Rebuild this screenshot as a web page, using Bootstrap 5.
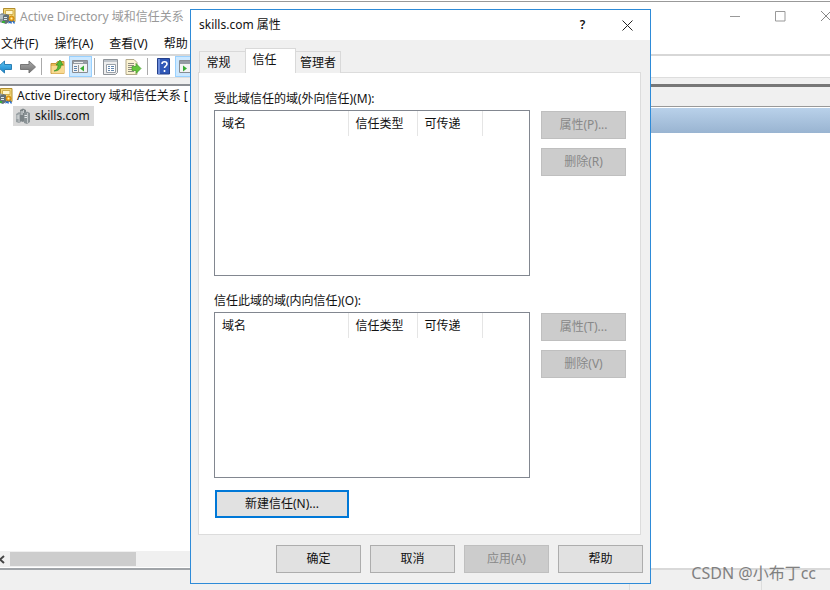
<!DOCTYPE html>
<html lang="zh-CN">
<head>
<meta charset="utf-8">
<meta name="viewport" content="width=device-width, initial-scale=1">
<title>Active Directory 域和信任关系</title>
<link href="https://cdn.jsdelivr.net/npm/bootstrap@5.3.0/dist/css/bootstrap.min.css" rel="stylesheet">
<style>
body { font: 12px/18px "Noto Sans", "Noto Sans CJK SC", sans-serif; color: #111; background: #fff; }
button { font: inherit; color: inherit; }
svg { display: block; flex: none; }
.app { border-top: 1px solid #999; margin-top: 1px; height: calc(100vh - 1px); }
.app-title { height: 31px; color: #999; }
.app-title .caption { padding-top: 6px; }
.win-btn { width: 45px; height: 28px; }
.win-close { width: 27px; }
.menus { height: 21px; padding-left: 1px; gap: 16px; }
.menus button { white-space: nowrap; }
.tools { height: 24px; border-top: 2px solid #d7d7d7; border-bottom: 1px solid #ddd; }
.tool { width: 23px; height: 21px; display: flex; align-items: center; justify-content: center; }
.tool-cut { width: 16px; justify-content: flex-start; }
.tool-on { background: #cce8ff; border: 1px solid #99d1ff; }
.rule { width: 1px; height: 17px; background: #aaa; margin: 0 4px 0 2px; }
.strip { height: 6px; background: #f0f0f0; }
.tree { width: 50%; border-top: 2px solid #8c8f94; }
.tree-row { height: 20px; }
.tree-picked { background: #d9d9d9; margin-left: 13px; padding: 0 4px 0 2px; gap: 4px; }
.scroller { height: 16px; background: #f0f0f0; }
.scroll-thumb { width: 126px; height: 14px; background: #cdcdcd; margin-left: 5px; }
.detail { border-top: 3px solid #777; }
.detail-head { height: 20px; background: #f0f0f0; border-bottom: 1px solid #999; }
.detail-bar { height: 25px; margin-top: 1px; background: linear-gradient(#b9d1ea, #99b4d1); }
.status { height: 22px; background: #f0f0f0; border-top: 2px solid #d9d9d9; margin-top: 1px; }
.status-left { margin-top: -2px; border-top: 2px solid #a0a4a8; width: 190px; }
.status-center { width: 440px; border-right: 1px solid #ddd; }
.status-mid { width: 132px; border-right: 1px solid #ddd; }
.dlg { position: absolute; left: 190px; top: 9px; width: 461px; background: #f0f0f0; border: 1px solid #2e8bd8; }
.dlg-title { height: 30px; padding-left: 8px; }
.dlg-body { padding: 8px 9px 10px 7px; }
.dlg .tabs { padding-left: 1px; position: relative; margin-bottom: -1px; }
.tab-btn { height: 22px; border: 1px solid #d9d9d9; border-bottom: 0; background: #f0f0f0; padding: 0; width: 46px; }
.tab-btn span { display: block; margin-right: 8px; }
.tab-last { width: 45px; border-left: 0; }
.tab-last span { margin-right: 0; }
.tab-btn.active { height: 25px; width: 51px; background: #fff; padding-bottom: 2px; }
.pane { background: #fff; border: 1px solid #dcdcdc; padding: 17px 14px 16px 15px; }
.group-label { margin-bottom: 2px; }
.list-box { height: 166px; border: 1px solid #828790; background: #fff; }
.list-box table { width: 100%; table-layout: fixed; border-collapse: collapse; }
.list-box th { font-weight: 400; height: 25px; padding: 1px 0 0 7px; border-right: 1px solid #e5e5e5; }
.list-box th:last-child { border-right: 0; }
.c1 { width: 133px; } .c2 { width: 69px; } .c3 { width: 65px; }
.group-row { gap: 11px; margin-bottom: 16px; }
.push { width: 85px; height: 28px; border: 1px solid #adadad; background: #e1e1e1; padding: 0; }
.push:disabled { background: #ccc; border-color: #bfbfbf; color: #888; }
.push-main { width: 134px; border: 2px solid #0078d7; margin: -4px 0 0 1px; }
.side { gap: 9px; padding-top: 1px; }
.foot { gap: 9px; padding-top: 10px; margin-right: -2px; }
.watermark { position: absolute; right: 14px; bottom: 5px; font-size: 16px; line-height: 24px; color: #808080; }
</style>
<script src="https://cdn.jsdelivr.net/npm/bootstrap@5.3.0/dist/js/bootstrap.bundle.min.js"></script>
</head>
<body class="overflow-hidden position-relative vh-100">

<svg width="0" height="0" class="position-absolute" aria-hidden="true">
  <defs>
    <linearGradient id="blue" x2="0" y2="1"><stop stop-color="#5cc4f2"/><stop offset="1" stop-color="#1581c9"/></linearGradient>
    <linearGradient id="grey" x2="0" y2="1"><stop stop-color="#aaa"/><stop offset="1" stop-color="#707070"/></linearGradient>
    <symbol id="domains" viewBox="0 0 16 16">
      <path d="M3.500 .5h11.500v13H3.500z" fill="#f3d978" stroke="#b28d2e"/><path d="M5.500 2.500h7.500v4H5.500z" fill="#fff7cf" stroke="#d1ae4e"/>
      <path d="M-1 7l3-2 3 1v8l-3 1-3-1z" fill="#8d999f"/><path d="M3 8l3-2 3 1v7l-3 2-3-1z" fill="#637078"/>
      <path d="M0 8h3M0 10h3M4 9.500h3M4 11.500h3" stroke="#dde8ec"/><path d="M2 13h3v2H2z" fill="#39ad38"/>
      <path d="M10 12l-2 3.500 2-.5 1.500 1 .5-3 2 3 1-1-1.500-3z" fill="#2a6fc9"/>
      <circle cx="11.500" cy="10.500" r="2.500" fill="#f0a414" stroke="#c98512"/><circle cx="11.500" cy="10.500" r="1" fill="#fff3b0"/>
    </symbol>
  </defs>
</svg>

<div class="app d-flex flex-column">
  <header class="app-title d-flex justify-content-between">
    <div class="caption d-flex gap-1 text-nowrap"><svg width="16" height="18"><use href="#domains" width="16" height="16"/></svg><span>Active Directory 域和信任关系</span></div>
    <div class="d-flex">
      <button class="win-btn btn p-0 border-0 rounded-0" aria-label="最小化"><svg class="mx-auto" width="11" height="11" stroke="#999"><path d="M0 5.500h10"/></svg></button>
      <button class="win-btn btn p-0 border-0 rounded-0" aria-label="最大化"><svg class="mx-auto" width="11" height="11" fill="none" stroke="#999"><path d="M.5.500h9.500v9.500H.5z"/></svg></button>
      <button class="win-btn win-close btn p-0 border-0 rounded-0" aria-label="关闭"><svg class="ms-auto" width="9" height="11" stroke="#888"><path d="M0 0l10 10M0 10L10 0"/></svg></button>
    </div>
  </header>

  <nav class="menus d-flex">
    <button class="border-0 bg-transparent p-0">文件(F)</button>
    <button class="border-0 bg-transparent p-0">操作(A)</button>
    <button class="border-0 bg-transparent p-0">查看(V)</button>
    <button class="border-0 bg-transparent p-0">帮助</button>
  </nav>

  <div class="tools d-flex align-items-center">
    <button class="tool tool-cut border-0 bg-transparent p-0" aria-label="后退"><svg width="12" height="14"><path d="M-2 7L4.500 1v3.500h7v5h-7V13z" fill="url(#blue)" stroke="#2a7fb5"/></svg></button>
    <button class="tool border-0 bg-transparent p-0" aria-label="前进"><svg width="16" height="14"><path d="M.5 4.500H9V1l6.500 6L9 13V9.500H.5z" fill="url(#grey)" stroke="#777"/></svg></button>
    <span class="rule"></span>
    <button class="tool border-0 bg-transparent p-0" aria-label="上一级"><svg width="16" height="16"><path d="M1 4.500h5l1.500-2H14v12H1z" fill="#e8b957" stroke="#c69538"/><path d="M1.500 7h13v7.500h-13z" fill="#f8d991"/><path d="M4 12c3-1 4-3 4-6H6l4-5 3 5h-2c0 4-3 6-7 6z" fill="#54b936" stroke="#2e8a20" stroke-width=".6"/></svg></button>
    <button class="tool tool-on p-0" aria-label="显示/隐藏控制台树"><svg width="17" height="14"><path d="M.5.500h15v12H.5z" fill="#f4f4f4" stroke="#888c92"/><path d="M1 1h14v3H1z" fill="#969ca4"/><path d="M2 2.500h9" stroke="#eee"/><path d="M6.500 5v8" stroke="#999"/><path d="M2 6.500h3M2 8.500h3M2 10.500h3" stroke="#5e83ad"/><path d="M12 5.500v6L8 8.500z" fill="#38ac35"/></svg></button>
    <span class="rule"></span>
    <button class="tool border-0 bg-transparent p-0" aria-label="属性"><svg width="16" height="16"><path d="M.5.500h14v13l-2 2H.5z" fill="#eee" stroke="#8f9499"/><path d="M1 1h13v2H1z" fill="#bfc5cb"/><path d="M3.500 5.500h9v8h-9z" fill="#fff" stroke="#9aa1a8"/><path d="M5 7.500h2M8 7.500h3M5 9.500h2M8 9.500h3M5 11.500h2M8 11.500h3" stroke="#6487ad"/></svg></button>
    <button class="tool border-0 bg-transparent p-0" aria-label="导出列表"><svg width="17" height="16"><path d="M1 .5h8l3 3v12H1z" fill="#fbf3d2" stroke="#b3aa8a"/><path d="M3 4.500h6M3 6.500h6M3 8.500h5M3 10.500h5M3 12.500h6" stroke="#8e8c80"/><path d="M7 7.500h4v-3l5 5-5 5v-3H7z" fill="#65c63c" stroke="#3f982a" stroke-width=".7"/></svg></button>
    <span class="rule"></span>
    <button class="tool border-0 bg-transparent p-0" aria-label="帮助"><svg width="14" height="17"><path d="M.5.500h12v15.500H.5z" fill="#3058b8" stroke="#233f8a"/><path d="M1 1h2v15H1z" fill="#6d8ddb"/><path d="M5 6c0-3 5-3 5 0 0 2-2.500 2-2.500 4M7.500 12v2" fill="none" stroke="#fff" stroke-width="1.600"/></svg></button>
    <button class="tool tool-on p-0" aria-label="操作窗格"><svg width="15" height="14"><path d="M.5.500h14v12H.5z" fill="#f4f4f4" stroke="#888c92"/><path d="M1 1h13v3H1z" fill="#969ca4"/><path d="M4 5.500v6l4-3z" fill="#38ac35"/></svg></button>
  </div>
  <div class="strip"></div>

  <main class="d-flex flex-grow-1">
    <section class="tree d-flex flex-column">
      <div class="tree-row d-flex align-items-center text-nowrap"><svg class="me-1" width="13" height="16" viewBox="3 0 13 16"><use href="#domains" width="16" height="16"/></svg><span>Active Directory 域和信任关系 [</span></div>
      <div class="tree-row tree-picked d-flex align-items-center align-self-start">
        <svg width="16" height="16"><path d="M1 6l3-2 2 1v9l-2 1-3-1z" fill="#9aa1a4"/><path d="M5 2l3-1.500L11 2v10l-3 2-3-1z" fill="#7b8386"/><path d="M9 5l3-1.500L15 5v9l-3 2-3-1z" fill="#8b9396"/><path d="M12.500 5v10M8.500 2v3M4 6v8" stroke="#c3c8ca"/><path d="M9.500 7.500H12M9.500 9.500H12M5.500 4H8M5.500 6H8M1.500 8H4M1.500 10H4" stroke="#e3e6e7"/></svg>
        <span>skills.com</span>
      </div>
      <div class="scroller d-flex align-items-center mt-auto"><svg width="5" height="9" fill="none" stroke="#444" stroke-width="2"><path d="M4 1L0 4.500 4 8"/></svg><div class="scroll-thumb"></div></div>
    </section>
    <section class="detail flex-grow-1">
      <div class="detail-head"></div>
      <div class="detail-bar"></div>
    </section>
  </main>
  <footer class="status d-flex"><div class="status-left"></div><div class="status-center"></div><div class="status-mid"></div></footer>
</div>

<div class="dlg" role="dialog" aria-labelledby="dlgTitle">
  <div class="dlg-title bg-white d-flex align-items-center justify-content-between">
    <span id="dlgTitle">skills.com 属性</span>
    <div class="d-flex">
      <button class="win-btn border-0 bg-transparent p-0 fw-semibold" aria-label="帮助">?</button>
      <button class="win-btn border-0 bg-transparent p-0" aria-label="关闭"><svg class="mx-auto" width="11" height="11" stroke="#222"><path d="M.5.500l10 10M.5 10.500l10-10"/></svg></button>
    </div>
  </div>
  <div class="dlg-body">
    <div class="tabs d-flex align-items-end" role="tablist">
      <button class="tab-btn border-end-0" role="tab"><span>常规</span></button>
      <button class="tab-btn active" role="tab" aria-selected="true"><span class="me-2 pe-1">信任</span></button>
      <button class="tab-btn tab-last" role="tab"><span>管理者</span></button>
    </div>
    <div class="pane" role="tabpanel">
      <div class="group-label" id="outLabel">受此域信任的域(外向信任)(M):</div>
      <div class="group-row d-flex">
        <div class="list-box flex-grow-1">
          <table aria-labelledby="outLabel"><thead><tr><th class="c1">域名</th><th class="c2">信任类型</th><th class="c3">可传递</th><th></th></tr></thead></table>
        </div>
        <div class="side d-flex flex-column">
          <button class="push" disabled>属性(P)...</button>
          <button class="push" disabled>删除(R)</button>
        </div>
      </div>
      <div class="group-label" id="inLabel">信任此域的域(内向信任)(O):</div>
      <div class="group-row d-flex">
        <div class="list-box flex-grow-1">
          <table aria-labelledby="inLabel"><thead><tr><th class="c1">域名</th><th class="c2">信任类型</th><th class="c3">可传递</th><th></th></tr></thead></table>
        </div>
        <div class="side d-flex flex-column">
          <button class="push" disabled>属性(T)...</button>
          <button class="push" disabled>删除(V)</button>
        </div>
      </div>
      <button class="push push-main d-block">新建信任(N)...</button>
    </div>
    <div class="foot d-flex justify-content-end">
      <button class="push">确定</button>
      <button class="push">取消</button>
      <button class="push" disabled>应用(A)</button>
      <button class="push">帮助</button>
    </div>
  </div>
</div>
<div class="watermark">CSDN @小布丁cc</div>
</body>
</html>
